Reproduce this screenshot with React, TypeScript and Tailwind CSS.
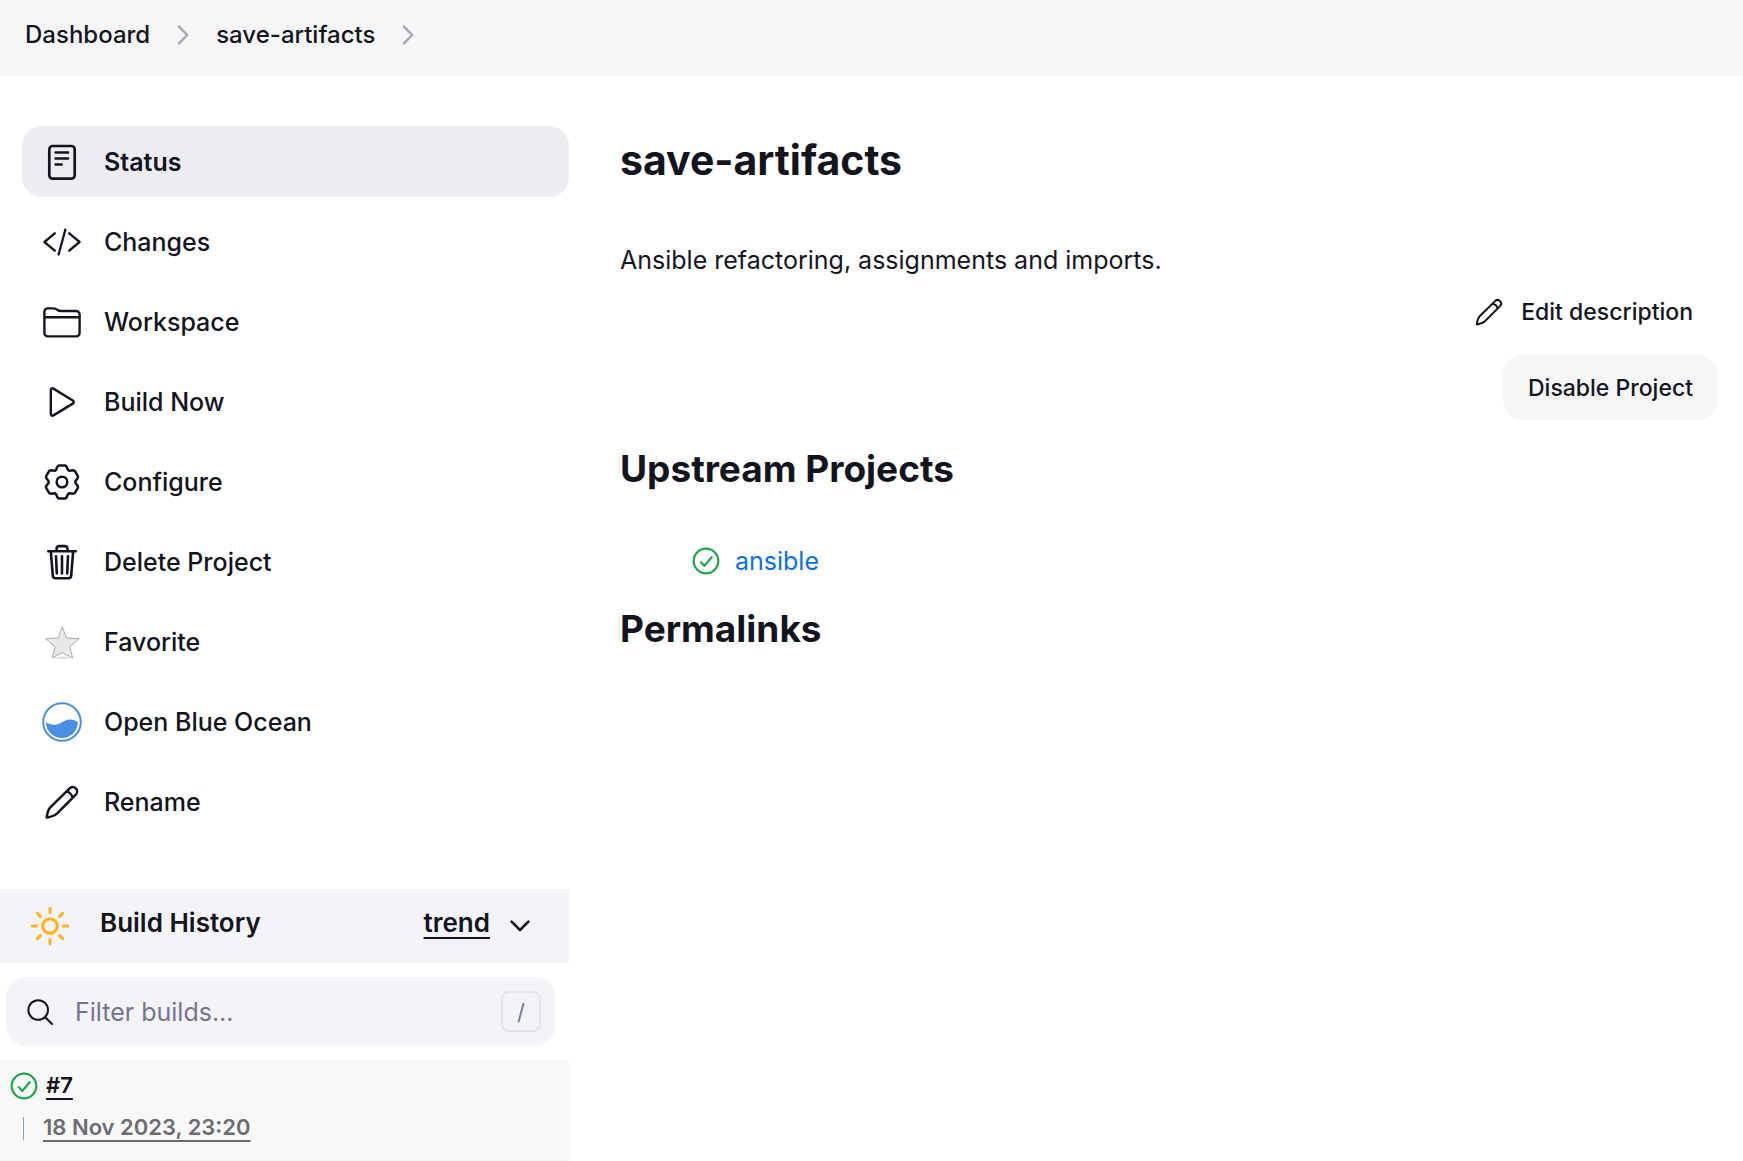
import React from "react";

type IconProps = { className?: string };

function Stroke({ className = "size-10", width = 2.4, children }: IconProps & { width?: number; children: React.ReactNode }) {
  return (
    <svg
      viewBox="0 0 40 40"
      className={`shrink-0 ${className}`}
      fill="none"
      stroke="currentColor"
      strokeWidth={width}
      strokeLinecap="round"
      strokeLinejoin="round"
      aria-hidden="true"
    >
      {children}
    </svg>
  );
}

const StatusIcon = () => (
  <Stroke width={2.7}>
    <rect x="7.3" y="4" width="25.4" height="32.7" rx="3.4" />
    <path d="M13.6 10.5H26M13.6 16.5H26M13.6 22.5H19.6" />
  </Stroke>
);

const ChangesIcon = () => (
  <Stroke width={2.3}>
    <path d="M12.8 11.3 2.4 20l10.4 8.7M27.2 11.3 37.6 20l-10.4 8.7M23.4 7.5l-6.8 25" />
  </Stroke>
);

const WorkspaceIcon = () => (
  <Stroke width={2.4}>
    <path d="M2.4 31V9.8a3.4 3.4 0 0 1 3.4-3.4h5.4c1.8 0 2.8.4 4 1.3 1.2.9 2.2 1.3 4 1.3H34.2a3.4 3.4 0 0 1 3.4 3.4V31a3.4 3.4 0 0 1-3.4 3.4H5.8A3.4 3.4 0 0 1 2.4 31ZM2.4 15.2h35.2" />
  </Stroke>
);

const PlayIcon = () => (
  <Stroke width={2.4}>
    <path d="M8.8 8.2v23.6c0 1.5 1.3 2.3 2.6 1.6l19.4-11.8c1.3-.8 1.3-2.4 0-3.2L11.4 6.6c-1.3-.7-2.6.1-2.6 1.6Z" />
  </Stroke>
);

/* One tooth at the top of the gear, repeated six times around the centre. */
const TOOTH = [[-6, -12], [-4.5, -15.6], [-3.2, -16.6], [3.2, -16.6], [4.5, -15.6], [6, -12]];
const GEAR =
  "M" +
  [0, 60, 120, 180, 240, 300]
    .flatMap((deg) => {
      const a = (deg * Math.PI) / 180;
      return TOOTH.map(
        ([x, y]) => `${(20 + x * Math.cos(a) - y * Math.sin(a)).toFixed(2)} ${(20 + x * Math.sin(a) + y * Math.cos(a)).toFixed(2)}`,
      );
    })
    .join("L") +
  "Z";

const GearIcon = () => (
  <Stroke width={2.5}>
    <path d={GEAR} />
    <circle cx="20" cy="20" r="5.3" />
  </Stroke>
);

const TrashIcon = () => (
  <Stroke width={2.6}>
    <path d="M8.8 9.2l2 24.4c.1 1.5 1.2 2.6 2.7 2.6h13c1.5 0 2.6-1.1 2.7-2.6l2-24.4M6.3 9.2h27.4M14.6 9V6.6c0-1.5 1-2.5 2.5-2.5h5.8c1.5 0 2.5 1 2.5 2.5V9M20 14.2v17.2M14 14.2l.8 17.2M26 14.2l-.8 17.2" />
  </Stroke>
);

const StarIcon = () => (
  <svg viewBox="0 0 40 40" className="size-10 shrink-0" aria-hidden="true">
    <defs>
      <linearGradient id="star-fill" x1="0" y1="0" x2="1" y2="1">
        <stop offset="0" stopColor="#f6f6f5" />
        <stop offset="0.5" stopColor="#e6e6e5" />
        <stop offset="1" stopColor="#efefee" />
      </linearGradient>
      <radialGradient id="star-shadow">
        <stop offset="0" stopColor="#000" stopOpacity="0.18" />
        <stop offset="1" stopColor="#000" stopOpacity="0" />
      </radialGradient>
    </defs>
    <ellipse cx="20.5" cy="35.8" rx="15" ry="1.8" fill="url(#star-shadow)" />
    <path
      d="M20.3 4.6 24.6 16 37.2 16.8 27.6 24.7 30.6 35.6 20.3 30.8 10.3 35.6 13.2 24.7 3.6 16.8 16.1 16Z"
      fill="url(#star-fill)"
      stroke="#a3a3a1"
      strokeWidth="0.9"
      strokeLinejoin="round"
    />
  </svg>
);

const OceanIcon = () => (
  <svg viewBox="0 0 40 40" className="size-10 shrink-0" aria-hidden="true">
    <circle cx="20" cy="20" r="18.8" fill="none" stroke="#4a90e2" strokeWidth="2" />
    <path d="M4 20.2c4 2.6 8.6 3.4 13.4 1.2 4.8-2.2 6.4-4 11-4 2.9 0 5 1 7.4 2.6C36 28.6 29 36 20 36S4 29 4 20.2Z" fill="#4a90e2" />
  </svg>
);

const PencilIcon = ({ className }: IconProps) => (
  <Stroke className={className} width={2.5}>
    <path d="M4.7 35.5c.5-3.9 1.2-7.5 3.6-10.1L27.9 6.1a4.4 4.4 0 0 1 6.2 6.2L14.9 31.6c-2.7 2.4-6.3 3.3-10.2 3.9ZM24.4 9.6c3 .5 5.7 3.2 6.2 6.2" />
  </Stroke>
);

const SunIcon = () => (
  <svg viewBox="0 0 40 40" className="size-10 shrink-0" fill="none" stroke="#ffb41c" strokeWidth="3" strokeLinecap="round" aria-hidden="true">
    <circle cx="20" cy="20" r="7.3" />
    <path d="M20 2.2v4.2M20 33.6v4.2M2.2 20h4.2M33.6 20h4.2M7.4 7.4l3 3M29.6 29.6l3 3M7.4 32.6l3-3M29.6 10.4l3-3" />
  </svg>
);

const SuccessIcon = () => (
  <svg viewBox="0 0 28 28" className="size-7 shrink-0" fill="none" stroke="#1ea64b" strokeWidth="2.2" strokeLinecap="round" strokeLinejoin="round" aria-hidden="true">
    <circle cx="14" cy="14" r="12.3" />
    <path d="M8.9 15.2l3.5 3.7 7.2-8.7" />
  </svg>
);

const Chevron = ({ className }: IconProps) => (
  <svg viewBox="0 0 12 20" className={`h-5 w-3 shrink-0 ${className ?? ""}`} fill="none" stroke="currentColor" strokeWidth="2.5" strokeLinecap="round" strokeLinejoin="round" aria-hidden="true">
    <path d="M2 1.6 10.2 10 2 18.4" />
  </svg>
);

const NAV = [
  { label: "Status", Icon: StatusIcon, active: true },
  { label: "Changes", Icon: ChangesIcon },
  { label: "Workspace", Icon: WorkspaceIcon },
  { label: "Build Now", Icon: PlayIcon },
  { label: "Configure", Icon: GearIcon },
  { label: "Delete Project", Icon: TrashIcon },
  { label: "Favorite", Icon: StarIcon },
  { label: "Open Blue Ocean", Icon: OceanIcon },
  { label: "Rename", Icon: PencilIcon },
];

export default function App() {
  return (
    <div className="min-h-screen bg-white font-['Inter',sans-serif] text-[#14141f]">
      <header className="bg-[#f6f6f8] px-[25px] pt-[21px] pb-[27px]">
        <nav aria-label="Breadcrumb">
          <ol className="flex items-center gap-[27px] text-2xl/7 font-medium">
            <li><a href="#dashboard">Dashboard</a></li>
            <li><Chevron className="text-[#a6a6b8]" /></li>
            <li><a href="#project">save-artifacts</a></li>
            <li><Chevron className="text-[#a6a6b8]" /></li>
          </ol>
        </nav>
      </header>

      <div className="flex">
        <aside className="w-[569px] shrink-0 pt-[50px]">
          <nav aria-label="Project" className="flex flex-col gap-[9px] pl-[22px]">
            {NAV.map(({ label, Icon, active }) => (
              <a
                key={label}
                href="#task"
                aria-current={active ? "page" : undefined}
                className={
                  active
                    ? "flex h-[71px] items-center gap-[22px] rounded-[20px] bg-[#ecedf3] px-5 text-[25px]/8 font-semibold"
                    : "flex h-[71px] items-center gap-[22px] rounded-[20px] px-5 text-[25px]/8 font-medium"
                }
              >
                <Icon />
                {label}
              </a>
            ))}
          </nav>

          <section className="mt-[52px]" aria-label="Build History">
            <div className="flex h-[74px] items-center bg-[#f3f3f8] pr-[39px] pl-[30px] text-[26px]/8 font-semibold">
              <SunIcon />
              <h2 className="ml-[30px] pb-1.5">Build History</h2>
              <a href="#trend" className="ml-auto pb-1.5 underline decoration-2 underline-offset-[5px]">trend</a>
              <button type="button" aria-label="Collapse build history" className="ml-5">
                <svg viewBox="0 0 20 20" className="size-5" fill="none" stroke="currentColor" strokeWidth="2.5" strokeLinecap="round" strokeLinejoin="round" aria-hidden="true">
                  <path d="M1.6 5.6 10 14 18.4 5.6" />
                </svg>
              </button>
            </div>

            <div className="mt-[14px] mr-[14px] mb-[14px] ml-1.5 flex h-[69px] items-center rounded-[20px] bg-[#f3f3f8] pr-[14px] pl-5">
              <label htmlFor="filter-builds" aria-label="Filter builds">
                <svg viewBox="0 0 28 28" className="size-7 shrink-0" fill="none" stroke="currentColor" strokeWidth="2" strokeLinecap="round" aria-hidden="true">
                  <circle cx="12.2" cy="12" r="9.8" />
                  <path d="M19.3 19.2 26 26" />
                </svg>
              </label>
              <input
                id="filter-builds"
                type="text"
                placeholder="Filter builds..."
                className="ml-[21px] min-w-0 flex-1 bg-transparent text-[25px]/8 outline-none placeholder:text-[#737390]"
              />
              <kbd className="flex h-[41px] w-10 items-center justify-center rounded-lg border-2 border-[#e4e4ef] font-['Inter',sans-serif] text-[22px]/7 text-[#737390]">
                /
              </kbd>
            </div>

            <table className="w-full border-y border-[#f3f3f3] bg-[#f8f8f8]">
              <tbody>
                <tr>
                  <td className="px-[10px] pt-[10px] pb-[17px]">
                    <div className="flex items-center gap-2">
                      <SuccessIcon />
                      <a href="#build-7" className="pb-0.5 text-[22px]/7 font-semibold underline decoration-2 underline-offset-[5px]">#7</a>
                    </div>
                    <div className="mt-3 ml-[13px] flex items-center">
                      <span className="h-[23px] w-px bg-[#93a1ad]" />
                      <a href="#build-7" className="ml-[19px] pb-0.5 text-[22px]/7 font-semibold text-[#6c6c70] underline decoration-2 underline-offset-[5px]">
                        18 Nov 2023, 23:20
                      </a>
                    </div>
                  </td>
                </tr>
              </tbody>
            </table>
          </section>
        </aside>

        <main className="min-w-0 flex-1 pt-[60px] pr-[25px] pl-[51px]">
          <h1 className="text-[41px]/[48px] font-bold">save-artifacts</h1>
          <p className="mt-[60px] text-[25px]/8">Ansible refactoring, assignments and imports.</p>
          <div className="mt-[3px] flex flex-col items-end gap-[11px] text-[23px]/7 font-medium">
            <a href="#edit" className="flex h-[65px] items-center gap-4 px-[25px]">
              <PencilIcon className="size-8" />
              Edit description
            </a>
            <button type="button" className="h-[65px] rounded-[20px] bg-[#f6f6f9] px-[25px]">Disable Project</button>
          </div>
          <h2 className="mt-[25px] text-[37px]/[48px] font-bold">Upstream Projects</h2>
          <ul className="mt-[52px] pl-[72px]">
            <li className="flex items-center gap-[15px] text-[25px]/8">
              <SuccessIcon />
              <a href="#ansible" className="text-[#0a6fe8]">ansible</a>
            </li>
          </ul>
          <h2 className="mt-7 text-[37px]/[48px] font-bold">Permalinks</h2>
        </main>
      </div>
    </div>
  );
}
